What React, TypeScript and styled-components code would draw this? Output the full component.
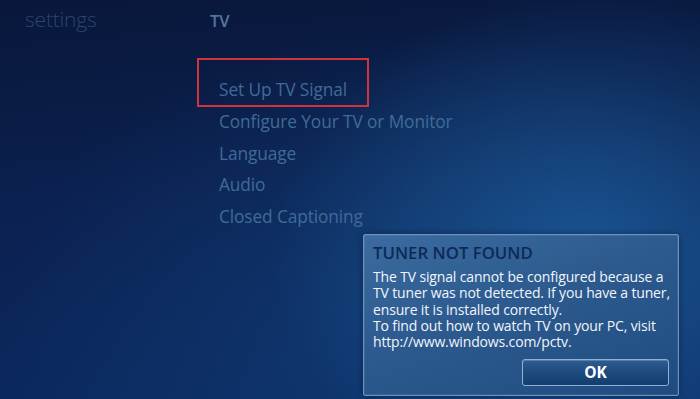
import * as React from 'react';
import styled, { createGlobalStyle } from 'styled-components';

const GlobalStyle = createGlobalStyle`
  html, body {
    margin: 0;
    padding: 0;
    background: #0a1a3e;
  }
  * {
    box-sizing: border-box;
  }
`;

const Screen = styled.div`
  position: relative;
  width: 700px;
  height: 399px;
  overflow: hidden;
  font-family: 'Open Sans', 'Noto Sans', sans-serif;
  background:
    radial-gradient(ellipse 320px 260px at 590px 250px, rgba(30, 96, 160, 0.75), rgba(30, 96, 160, 0) 100%),
    radial-gradient(ellipse 420px 300px at 420px 330px, rgba(20, 70, 130, 0.55), rgba(20, 70, 130, 0) 100%),
    linear-gradient(175deg, #09173a 0%, #0b2150 45%, #0b2a62 100%);
`;

const Header = styled.div`
  display: flex;
  align-items: baseline;
  height: 40px;
  padding-top: 5px;
`;

const Breadcrumb = styled.div`
  width: 210px;
  padding-left: 25px;
  font-size: 21px;
  font-weight: 300;
  color: #2a4670;
  letter-spacing: -0.2px;
`;

const Section = styled.div`
  font-size: 16.5px;
  font-weight: 600;
  color: #54779e;
`;

const Menu = styled.div`
  display: flex;
  flex-direction: column;
  margin-left: 197px;
  margin-top: 18px;
`;

const MenuItem = styled.div<{ focused?: boolean }>`
  width: ${props => (props.focused ? '172px' : 'auto')};
  height: ${props => (props.focused ? '49px' : '31.5px')};
  padding-top: ${props => (props.focused ? '15px' : '0')};
  padding-left: ${props => (props.focused ? '20px' : '22px')};
  margin-bottom: ${props => (props.focused ? '-1px' : '0')};
  border: ${props => (props.focused ? '2px solid #d2323c' : 'none')};
  line-height: ${props => (props.focused ? '30px' : '31.5px')};
  font-size: 17.3px;
  color: #406b98;
  letter-spacing: -0.1px;
  white-space: nowrap;
`;

const Dialog = styled.div`
  position: absolute;
  left: 363px;
  top: 234px;
  width: 316px;
  height: 162px;
  padding: 7px 9px 0 9px;
  border: 1px solid #6b93be;
  border-radius: 2px;
  background: linear-gradient(160deg, #3b6ba0 0%, #2c5a8f 45%, #1f4b80 100%);
  box-shadow: inset 0 0 0 1px rgba(255, 255, 255, 0.08), 0 0 6px rgba(0, 10, 30, 0.4);
  display: flex;
  flex-direction: column;
`;

const DialogTitle = styled.div`
  font-size: 16.8px;
  font-weight: 600;
  color: #0c2a58;
  line-height: 22px;
  margin-bottom: 5px;
`;

const DialogBody = styled.div`
  font-size: 14px;
  line-height: 16.3px;
  color: #f2f5fa;
  letter-spacing: -0.15px;
  white-space: nowrap;
`;

const Actions = styled.div`
  display: flex;
  justify-content: flex-end;
  margin-top: 8.5px;
`;

const OkButton = styled.button`
  width: 147px;
  height: 27px;
  border: 1px solid #8fb0d4;
  border-radius: 3px;
  background: linear-gradient(to bottom, #2e5d92 0%, #1d4a7e 50%, #143e70 100%);
  box-shadow: inset 0 1px 0 rgba(255, 255, 255, 0.2);
  color: #ffffff;
  font-family: 'Open Sans', 'Noto Sans', sans-serif;
  font-size: 15.5px;
  font-weight: 700;
  padding: 0;
  cursor: pointer;
`;

const menuItems = [
  'Set Up TV Signal',
  'Configure Your TV or Monitor',
  'Language',
  'Audio',
  'Closed Captioning',
];

const App: React.FC = () => {
  return (
    <>
      <GlobalStyle />
      <Screen>
        <Header>
          <Breadcrumb>settings</Breadcrumb>
          <Section>TV</Section>
        </Header>
        <Menu>
          {menuItems.map((label, i) => (
            <MenuItem key={label} focused={i === 0}>
              {label}
            </MenuItem>
          ))}
        </Menu>
        <Dialog>
          <DialogTitle>TUNER NOT FOUND</DialogTitle>
          <DialogBody>
            The TV signal cannot be configured because a
            <br />
            TV tuner was not detected. If you have a tuner,
            <br />
            ensure it is installed correctly.
            <br />
            To find out how to watch TV on your PC, visit
            <br />
            http://www.windows.com/pctv.
          </DialogBody>
          <Actions>
            <OkButton>OK</OkButton>
          </Actions>
        </Dialog>
      </Screen>
    </>
  );
};

export default App;
